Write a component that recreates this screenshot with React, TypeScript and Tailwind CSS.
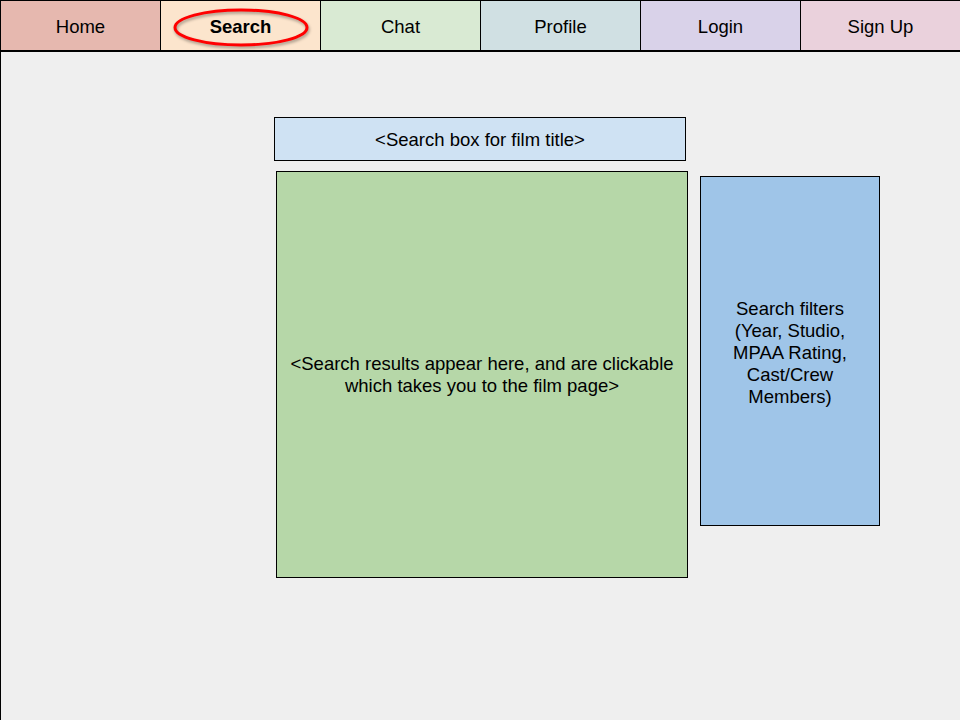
import React from 'react';

const tabs = [
  { label: 'Home', bg: 'bg-[#e6b8af]' },
  { label: 'Search', bg: 'bg-[#fce5cd]', active: true },
  { label: 'Chat', bg: 'bg-[#d9ead3]' },
  { label: 'Profile', bg: 'bg-[#d0e0e3]' },
  { label: 'Login', bg: 'bg-[#d9d2e9]' },
  { label: 'Sign Up', bg: 'bg-[#ead1dc]' },
];

const App: React.FC = () => {
  return (
    <div className="flex min-h-screen w-[960px] flex-col bg-[#efefef] text-black font-['Liberation_Sans',Arial,sans-serif] text-[18.5px]">
      {/* Nav bar */}
      <div className="flex h-[52px] border-t-[1.5px] border-b-2 border-black">
        {tabs.map((tab) => (
          <div
            key={tab.label}
            className={`relative flex w-[160px] items-center justify-center border-l border-black pt-[3px] ${tab.bg}`}
          >
            {tab.active && (
              <svg
                className="absolute left-[12px] top-[7px] drop-shadow-[1px_2px_1.5px_rgba(0,0,0,0.35)]"
                width="138"
                height="40"
                viewBox="0 0 138 40"
              >
                <ellipse cx="68" cy="19.5" rx="66" ry="17.5" fill="none" stroke="#ff0000" strokeWidth="3" />
              </svg>
            )}
            <span className={`relative ${tab.active ? 'font-bold' : ''}`}>{tab.label}</span>
          </div>
        ))}
      </div>

      {/* Content */}
      <div className="flex flex-1 items-start border-l border-black pl-[273px] pt-[65px]">
        <div className="flex w-[414px] flex-col">
          <div className="flex h-[44px] w-[412px] items-center justify-center border border-black bg-[#cfe2f3] pt-[1px]">
            &lt;Search box for film title&gt;
          </div>
          <div className="ml-[2px] mt-[10px] flex h-[407px] w-[412px] items-center justify-center border-[1.5px] border-black bg-[#b6d7a8] px-2 text-center leading-[22px]">
            &lt;Search results appear here, and are clickable
            <br />
            which takes you to the film page&gt;
          </div>
        </div>
        <div className="ml-[12px] mt-[59px] flex h-[350px] w-[180px] items-center justify-center border border-black bg-[#9fc5e8] pt-[3px] text-center leading-[22px]">
          Search filters
          <br />
          (Year, Studio,
          <br />
          MPAA Rating,
          <br />
          Cast/Crew
          <br />
          Members)
        </div>
      </div>
    </div>
  );
};

export default App;
